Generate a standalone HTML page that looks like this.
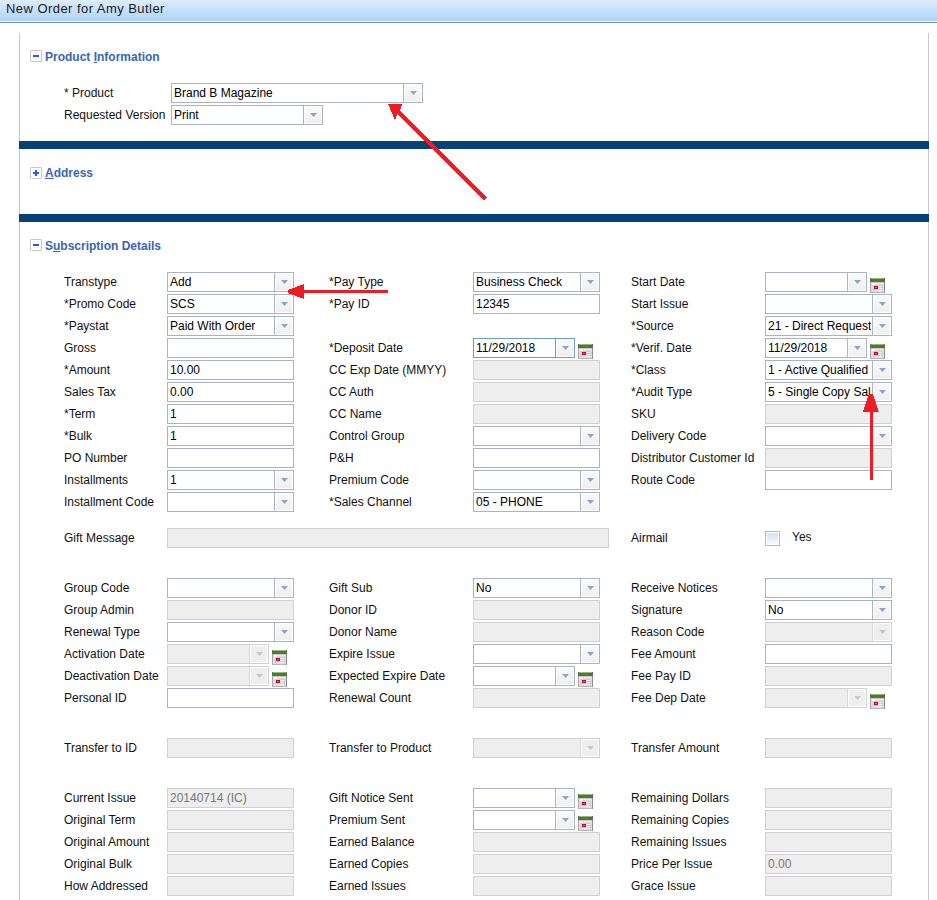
<!DOCTYPE html>
<html><head><meta charset="utf-8"><style>
*{box-sizing:border-box;margin:0;padding:0}
html,body{width:937px;height:900px;overflow:hidden;background:#fff;font-family:"Liberation Sans",sans-serif;font-size:12px;color:#000}
.title{position:absolute;left:0;top:0;width:937px;height:21px;background:linear-gradient(#ddedfd,#aed3f6);}
.title span{position:absolute;left:6px;top:1px;font-size:13px;color:#1a1a1a;letter-spacing:0.45px}
.tl1{position:absolute;left:0;top:21px;width:937px;height:1px;background:#fff}
.tl2{position:absolute;left:0;top:22px;width:937px;height:1px;background:#7095bb}
.vl{position:absolute;top:33px;width:1px;height:867px;background:#c8c8c8}
.bar{position:absolute;left:19px;width:910px;height:8px;background:#064275}
.hdr{position:absolute;left:30px;height:12px}
.box{position:absolute;left:0;top:0;width:12px;height:12px;border:1px solid #c8c8c8;border-radius:1px;background:#fff}
.box i{position:absolute;left:2px;top:4px;width:6px;height:2px;background:#1c5ff2}
.box b{position:absolute;left:4px;top:2px;width:2px;height:6px;background:#1c5ff2}
.hdr span{position:absolute;left:15px;top:0px;font-weight:bold;font-size:12px;color:#3a66b4;white-space:nowrap}
.hdr u{text-decoration:underline}
.lbl{position:absolute;height:20px;line-height:20px;white-space:nowrap;color:#111}
.inp{position:absolute;height:20px;border:1px solid #a9b4c3;background:#fff;overflow:hidden}
.inp.dis{border-color:#d0d0d0;background:#eeeeee}
.inp.foc{border-color:#6d9cc9}
.inp .v{position:absolute;left:2px;top:0;height:18px;line-height:18px;white-space:nowrap;color:#000}
.inp .v.gt{color:#777}
.sel .btn{position:absolute;right:0;top:0;width:19px;height:18px;border-left:1px solid #a9b4c3;background:#fff;padding:1px}
.inp.foc .btn{border-left-color:#6d9cc9}
.sel .btn::before{content:"";position:absolute;left:1px;top:1px;right:1px;bottom:1px;background:linear-gradient(#f9f9f9,#efefef)}
.sel .btn .tri{position:absolute;left:6px;top:7px;fill:#8aa4d0}
.inp.dis .btn{border-left-color:#d8d8d8}
.inp.dis .btn::before{background:#eeeeee}
.inp.dis .btn .tri{fill:#c8c8c8}
.inp.sel .v{right:20px;overflow:hidden}
.calw{position:absolute;width:15px;height:15px}
.cal{display:block}
.chk{position:absolute;width:15px;height:15px;border:1px solid #b1b9c4;background:#fff;padding:1px}
.chk::before{content:"";display:block;width:11px;height:11px;background:linear-gradient(#d3e1ef,#f7fafd)}
.arrows{position:absolute;left:0;top:0}
</style></head><body>
<div class="title"><span>New Order for Amy Butler</span></div>
<div class="tl1"></div><div class="tl2"></div>
<div class="vl" style="left:19px"></div>
<div class="vl" style="left:928px"></div>
<div class="hdr" style="top:50px"><div class="box"><i></i></div><span>Product <u>I</u>nformation</span></div>
<div class="bar" style="top:141px"></div>
<div class="hdr" style="top:167px"><div class="box"><i></i><b></b></div><span style="top:-1px"><u>A</u>ddress</span></div>
<div class="bar" style="top:214px"></div>
<div class="hdr" style="top:239px"><div class="box"><i></i></div><span>S<u>u</u>bscription Details</span></div>
<div class="lbl" style="left:64px;top:272px">Transtype</div><div class="inp sel" style="left:167px;top:272px;width:127px"><span class="v">Add</span><div class="btn"><svg class="tri" width="7" height="4"><path d="M0 0H7L3.5 4Z"/></svg></div></div><div class="lbl" style="left:64px;top:294px">*Promo Code</div><div class="inp sel" style="left:167px;top:294px;width:127px"><span class="v">SCS</span><div class="btn"><svg class="tri" width="7" height="4"><path d="M0 0H7L3.5 4Z"/></svg></div></div><div class="lbl" style="left:64px;top:316px">*Paystat</div><div class="inp sel" style="left:167px;top:316px;width:127px"><span class="v">Paid With Order</span><div class="btn"><svg class="tri" width="7" height="4"><path d="M0 0H7L3.5 4Z"/></svg></div></div><div class="lbl" style="left:64px;top:338px">Gross</div><div class="inp" style="left:167px;top:338px;width:127px"><span class="v"></span></div><div class="lbl" style="left:64px;top:360px">*Amount</div><div class="inp" style="left:167px;top:360px;width:127px"><span class="v">10.00</span></div><div class="lbl" style="left:64px;top:382px">Sales Tax</div><div class="inp" style="left:167px;top:382px;width:127px"><span class="v">0.00</span></div><div class="lbl" style="left:64px;top:404px">*Term</div><div class="inp" style="left:167px;top:404px;width:127px"><span class="v">1</span></div><div class="lbl" style="left:64px;top:426px">*Bulk</div><div class="inp" style="left:167px;top:426px;width:127px"><span class="v">1</span></div><div class="lbl" style="left:64px;top:448px">PO Number</div><div class="inp" style="left:167px;top:448px;width:127px"><span class="v"></span></div><div class="lbl" style="left:64px;top:470px">Installments</div><div class="inp sel" style="left:167px;top:470px;width:127px"><span class="v">1</span><div class="btn"><svg class="tri" width="7" height="4"><path d="M0 0H7L3.5 4Z"/></svg></div></div><div class="lbl" style="left:64px;top:492px">Installment Code</div><div class="inp sel" style="left:167px;top:492px;width:127px"><span class="v"></span><div class="btn"><svg class="tri" width="7" height="4"><path d="M0 0H7L3.5 4Z"/></svg></div></div><div class="lbl" style="left:329px;top:272px">*Pay Type</div><div class="inp sel" style="left:473px;top:272px;width:127px"><span class="v">Business Check</span><div class="btn"><svg class="tri" width="7" height="4"><path d="M0 0H7L3.5 4Z"/></svg></div></div><div class="lbl" style="left:329px;top:294px">*Pay ID</div><div class="inp" style="left:473px;top:294px;width:127px"><span class="v">12345</span></div><div class="lbl" style="left:329px;top:338px">*Deposit Date</div><div class="inp sel foc" style="left:473px;top:338px;width:102px"><span class="v">11/29/2018</span><div class="btn"><svg class="tri" width="7" height="4"><path d="M0 0H7L3.5 4Z"/></svg></div></div><div class="calw" style="left:578px;top:344px"><svg class="cal" width="15" height="15" viewBox="0 0 15 15" shape-rendering="crispEdges"><rect x="0" y="0" width="15" height="15" fill="#a9a9a9"/><rect x="1" y="4" width="13" height="10" fill="#dedede"/><rect x="14" y="3" width="1" height="12" fill="#8e8e8e"/><rect x="1" y="14" width="13" height="1" fill="#b9b9b9"/><rect x="0" y="0" width="15" height="4" fill="#4b7d2b"/><rect x="1" y="0" width="13" height="1" fill="#8fbb78"/><rect x="2" y="1" width="1" height="3" fill="#6b5a45"/><rect x="12" y="1" width="1" height="3" fill="#6b5a45"/><rect x="1" y="4" width="13" height="1" fill="#c9c9c9"/><rect x="2" y="5" width="3" height="2" fill="#fafafa"/><rect x="6" y="5" width="3" height="1" fill="#f0f0f0"/><rect x="10" y="5" width="3" height="1" fill="#f0f0f0"/><rect x="3" y="7" width="10" height="6" fill="#cfcfcf"/><rect x="4" y="8" width="8" height="1" fill="#f2f2f2"/><rect x="4" y="10" width="8" height="1" fill="#f2f2f2"/><rect x="4" y="12" width="8" height="1" fill="#f2f2f2"/><rect x="4" y="8" width="4" height="3" fill="#c3062f"/><rect x="5" y="9" width="2" height="1" fill="#d96a7e"/></svg></div><div class="lbl" style="left:329px;top:360px">CC Exp Date (MMYY)</div><div class="inp dis" style="left:473px;top:360px;width:127px"><span class="v"></span></div><div class="lbl" style="left:329px;top:382px">CC Auth</div><div class="inp dis" style="left:473px;top:382px;width:127px"><span class="v"></span></div><div class="lbl" style="left:329px;top:404px">CC Name</div><div class="inp dis" style="left:473px;top:404px;width:127px"><span class="v"></span></div><div class="lbl" style="left:329px;top:426px">Control Group</div><div class="inp sel" style="left:473px;top:426px;width:127px"><span class="v"></span><div class="btn"><svg class="tri" width="7" height="4"><path d="M0 0H7L3.5 4Z"/></svg></div></div><div class="lbl" style="left:329px;top:448px">P&amp;H</div><div class="inp" style="left:473px;top:448px;width:127px"><span class="v"></span></div><div class="lbl" style="left:329px;top:470px">Premium Code</div><div class="inp sel" style="left:473px;top:470px;width:127px"><span class="v"></span><div class="btn"><svg class="tri" width="7" height="4"><path d="M0 0H7L3.5 4Z"/></svg></div></div><div class="lbl" style="left:329px;top:492px">*Sales Channel</div><div class="inp sel" style="left:473px;top:492px;width:127px"><span class="v">05 - PHONE</span><div class="btn"><svg class="tri" width="7" height="4"><path d="M0 0H7L3.5 4Z"/></svg></div></div><div class="lbl" style="left:631px;top:272px">Start Date</div><div class="inp sel" style="left:765px;top:272px;width:102px"><span class="v"></span><div class="btn"><svg class="tri" width="7" height="4"><path d="M0 0H7L3.5 4Z"/></svg></div></div><div class="calw" style="left:870px;top:278px"><svg class="cal" width="15" height="15" viewBox="0 0 15 15" shape-rendering="crispEdges"><rect x="0" y="0" width="15" height="15" fill="#a9a9a9"/><rect x="1" y="4" width="13" height="10" fill="#dedede"/><rect x="14" y="3" width="1" height="12" fill="#8e8e8e"/><rect x="1" y="14" width="13" height="1" fill="#b9b9b9"/><rect x="0" y="0" width="15" height="4" fill="#4b7d2b"/><rect x="1" y="0" width="13" height="1" fill="#8fbb78"/><rect x="2" y="1" width="1" height="3" fill="#6b5a45"/><rect x="12" y="1" width="1" height="3" fill="#6b5a45"/><rect x="1" y="4" width="13" height="1" fill="#c9c9c9"/><rect x="2" y="5" width="3" height="2" fill="#fafafa"/><rect x="6" y="5" width="3" height="1" fill="#f0f0f0"/><rect x="10" y="5" width="3" height="1" fill="#f0f0f0"/><rect x="3" y="7" width="10" height="6" fill="#cfcfcf"/><rect x="4" y="8" width="8" height="1" fill="#f2f2f2"/><rect x="4" y="10" width="8" height="1" fill="#f2f2f2"/><rect x="4" y="12" width="8" height="1" fill="#f2f2f2"/><rect x="4" y="8" width="4" height="3" fill="#c3062f"/><rect x="5" y="9" width="2" height="1" fill="#d96a7e"/></svg></div><div class="lbl" style="left:631px;top:294px">Start Issue</div><div class="inp sel" style="left:765px;top:294px;width:127px"><span class="v"></span><div class="btn"><svg class="tri" width="7" height="4"><path d="M0 0H7L3.5 4Z"/></svg></div></div><div class="lbl" style="left:631px;top:316px">*Source</div><div class="inp sel" style="left:765px;top:316px;width:127px"><span class="v">21 - Direct Request</span><div class="btn"><svg class="tri" width="7" height="4"><path d="M0 0H7L3.5 4Z"/></svg></div></div><div class="lbl" style="left:631px;top:338px">*Verif. Date</div><div class="inp sel" style="left:765px;top:338px;width:102px"><span class="v">11/29/2018</span><div class="btn"><svg class="tri" width="7" height="4"><path d="M0 0H7L3.5 4Z"/></svg></div></div><div class="calw" style="left:870px;top:344px"><svg class="cal" width="15" height="15" viewBox="0 0 15 15" shape-rendering="crispEdges"><rect x="0" y="0" width="15" height="15" fill="#a9a9a9"/><rect x="1" y="4" width="13" height="10" fill="#dedede"/><rect x="14" y="3" width="1" height="12" fill="#8e8e8e"/><rect x="1" y="14" width="13" height="1" fill="#b9b9b9"/><rect x="0" y="0" width="15" height="4" fill="#4b7d2b"/><rect x="1" y="0" width="13" height="1" fill="#8fbb78"/><rect x="2" y="1" width="1" height="3" fill="#6b5a45"/><rect x="12" y="1" width="1" height="3" fill="#6b5a45"/><rect x="1" y="4" width="13" height="1" fill="#c9c9c9"/><rect x="2" y="5" width="3" height="2" fill="#fafafa"/><rect x="6" y="5" width="3" height="1" fill="#f0f0f0"/><rect x="10" y="5" width="3" height="1" fill="#f0f0f0"/><rect x="3" y="7" width="10" height="6" fill="#cfcfcf"/><rect x="4" y="8" width="8" height="1" fill="#f2f2f2"/><rect x="4" y="10" width="8" height="1" fill="#f2f2f2"/><rect x="4" y="12" width="8" height="1" fill="#f2f2f2"/><rect x="4" y="8" width="4" height="3" fill="#c3062f"/><rect x="5" y="9" width="2" height="1" fill="#d96a7e"/></svg></div><div class="lbl" style="left:631px;top:360px">*Class</div><div class="inp sel" style="left:765px;top:360px;width:127px"><span class="v">1 - Active Qualified</span><div class="btn"><svg class="tri" width="7" height="4"><path d="M0 0H7L3.5 4Z"/></svg></div></div><div class="lbl" style="left:631px;top:382px">*Audit Type</div><div class="inp sel" style="left:765px;top:382px;width:127px"><span class="v">5 - Single Copy Sales</span><div class="btn"><svg class="tri" width="7" height="4"><path d="M0 0H7L3.5 4Z"/></svg></div></div><div class="lbl" style="left:631px;top:404px">SKU</div><div class="inp dis" style="left:765px;top:404px;width:127px"><span class="v"></span></div><div class="lbl" style="left:631px;top:426px">Delivery Code</div><div class="inp sel" style="left:765px;top:426px;width:127px"><span class="v"></span><div class="btn"><svg class="tri" width="7" height="4"><path d="M0 0H7L3.5 4Z"/></svg></div></div><div class="lbl" style="left:631px;top:448px">Distributor Customer Id</div><div class="inp dis" style="left:765px;top:448px;width:127px"><span class="v"></span></div><div class="lbl" style="left:631px;top:470px">Route Code</div><div class="inp" style="left:765px;top:470px;width:127px"><span class="v"></span></div><div class="lbl" style="left:64px;top:528px">Gift Message</div><div class="inp dis" style="left:167px;top:528px;width:442px"><span class="v"></span></div><div class="lbl" style="left:631px;top:528px">Airmail</div><div class="chk" style="left:765px;top:531px"></div><div class="lbl" style="left:792px;top:527px">Yes</div><div class="lbl" style="left:64px;top:578px">Group Code</div><div class="inp sel" style="left:167px;top:578px;width:127px"><span class="v"></span><div class="btn"><svg class="tri" width="7" height="4"><path d="M0 0H7L3.5 4Z"/></svg></div></div><div class="lbl" style="left:64px;top:600px">Group Admin</div><div class="inp dis" style="left:167px;top:600px;width:127px"><span class="v"></span></div><div class="lbl" style="left:64px;top:622px">Renewal Type</div><div class="inp sel" style="left:167px;top:622px;width:127px"><span class="v"></span><div class="btn"><svg class="tri" width="7" height="4"><path d="M0 0H7L3.5 4Z"/></svg></div></div><div class="lbl" style="left:64px;top:644px">Activation Date</div><div class="inp sel dis" style="left:167px;top:644px;width:102px"><span class="v"></span><div class="btn"><svg class="tri" width="7" height="4"><path d="M0 0H7L3.5 4Z"/></svg></div></div><div class="calw" style="left:272px;top:650px"><svg class="cal" width="15" height="15" viewBox="0 0 15 15" shape-rendering="crispEdges"><rect x="0" y="0" width="15" height="15" fill="#a9a9a9"/><rect x="1" y="4" width="13" height="10" fill="#dedede"/><rect x="14" y="3" width="1" height="12" fill="#8e8e8e"/><rect x="1" y="14" width="13" height="1" fill="#b9b9b9"/><rect x="0" y="0" width="15" height="4" fill="#4b7d2b"/><rect x="1" y="0" width="13" height="1" fill="#8fbb78"/><rect x="2" y="1" width="1" height="3" fill="#6b5a45"/><rect x="12" y="1" width="1" height="3" fill="#6b5a45"/><rect x="1" y="4" width="13" height="1" fill="#c9c9c9"/><rect x="2" y="5" width="3" height="2" fill="#fafafa"/><rect x="6" y="5" width="3" height="1" fill="#f0f0f0"/><rect x="10" y="5" width="3" height="1" fill="#f0f0f0"/><rect x="3" y="7" width="10" height="6" fill="#cfcfcf"/><rect x="4" y="8" width="8" height="1" fill="#f2f2f2"/><rect x="4" y="10" width="8" height="1" fill="#f2f2f2"/><rect x="4" y="12" width="8" height="1" fill="#f2f2f2"/><rect x="4" y="8" width="4" height="3" fill="#c3062f"/><rect x="5" y="9" width="2" height="1" fill="#d96a7e"/></svg></div><div class="lbl" style="left:64px;top:666px">Deactivation Date</div><div class="inp sel dis" style="left:167px;top:666px;width:102px"><span class="v"></span><div class="btn"><svg class="tri" width="7" height="4"><path d="M0 0H7L3.5 4Z"/></svg></div></div><div class="calw" style="left:272px;top:672px"><svg class="cal" width="15" height="15" viewBox="0 0 15 15" shape-rendering="crispEdges"><rect x="0" y="0" width="15" height="15" fill="#a9a9a9"/><rect x="1" y="4" width="13" height="10" fill="#dedede"/><rect x="14" y="3" width="1" height="12" fill="#8e8e8e"/><rect x="1" y="14" width="13" height="1" fill="#b9b9b9"/><rect x="0" y="0" width="15" height="4" fill="#4b7d2b"/><rect x="1" y="0" width="13" height="1" fill="#8fbb78"/><rect x="2" y="1" width="1" height="3" fill="#6b5a45"/><rect x="12" y="1" width="1" height="3" fill="#6b5a45"/><rect x="1" y="4" width="13" height="1" fill="#c9c9c9"/><rect x="2" y="5" width="3" height="2" fill="#fafafa"/><rect x="6" y="5" width="3" height="1" fill="#f0f0f0"/><rect x="10" y="5" width="3" height="1" fill="#f0f0f0"/><rect x="3" y="7" width="10" height="6" fill="#cfcfcf"/><rect x="4" y="8" width="8" height="1" fill="#f2f2f2"/><rect x="4" y="10" width="8" height="1" fill="#f2f2f2"/><rect x="4" y="12" width="8" height="1" fill="#f2f2f2"/><rect x="4" y="8" width="4" height="3" fill="#c3062f"/><rect x="5" y="9" width="2" height="1" fill="#d96a7e"/></svg></div><div class="lbl" style="left:64px;top:688px">Personal ID</div><div class="inp" style="left:167px;top:688px;width:127px"><span class="v"></span></div><div class="lbl" style="left:329px;top:578px">Gift Sub</div><div class="inp sel" style="left:473px;top:578px;width:127px"><span class="v">No</span><div class="btn"><svg class="tri" width="7" height="4"><path d="M0 0H7L3.5 4Z"/></svg></div></div><div class="lbl" style="left:329px;top:600px">Donor ID</div><div class="inp dis" style="left:473px;top:600px;width:127px"><span class="v"></span></div><div class="lbl" style="left:329px;top:622px">Donor Name</div><div class="inp dis" style="left:473px;top:622px;width:127px"><span class="v"></span></div><div class="lbl" style="left:329px;top:644px">Expire Issue</div><div class="inp sel" style="left:473px;top:644px;width:127px"><span class="v"></span><div class="btn"><svg class="tri" width="7" height="4"><path d="M0 0H7L3.5 4Z"/></svg></div></div><div class="lbl" style="left:329px;top:666px">Expected Expire Date</div><div class="inp sel" style="left:473px;top:666px;width:102px"><span class="v"></span><div class="btn"><svg class="tri" width="7" height="4"><path d="M0 0H7L3.5 4Z"/></svg></div></div><div class="calw" style="left:578px;top:672px"><svg class="cal" width="15" height="15" viewBox="0 0 15 15" shape-rendering="crispEdges"><rect x="0" y="0" width="15" height="15" fill="#a9a9a9"/><rect x="1" y="4" width="13" height="10" fill="#dedede"/><rect x="14" y="3" width="1" height="12" fill="#8e8e8e"/><rect x="1" y="14" width="13" height="1" fill="#b9b9b9"/><rect x="0" y="0" width="15" height="4" fill="#4b7d2b"/><rect x="1" y="0" width="13" height="1" fill="#8fbb78"/><rect x="2" y="1" width="1" height="3" fill="#6b5a45"/><rect x="12" y="1" width="1" height="3" fill="#6b5a45"/><rect x="1" y="4" width="13" height="1" fill="#c9c9c9"/><rect x="2" y="5" width="3" height="2" fill="#fafafa"/><rect x="6" y="5" width="3" height="1" fill="#f0f0f0"/><rect x="10" y="5" width="3" height="1" fill="#f0f0f0"/><rect x="3" y="7" width="10" height="6" fill="#cfcfcf"/><rect x="4" y="8" width="8" height="1" fill="#f2f2f2"/><rect x="4" y="10" width="8" height="1" fill="#f2f2f2"/><rect x="4" y="12" width="8" height="1" fill="#f2f2f2"/><rect x="4" y="8" width="4" height="3" fill="#c3062f"/><rect x="5" y="9" width="2" height="1" fill="#d96a7e"/></svg></div><div class="lbl" style="left:329px;top:688px">Renewal Count</div><div class="inp dis" style="left:473px;top:688px;width:127px"><span class="v"></span></div><div class="lbl" style="left:631px;top:578px">Receive Notices</div><div class="inp sel" style="left:765px;top:578px;width:127px"><span class="v"></span><div class="btn"><svg class="tri" width="7" height="4"><path d="M0 0H7L3.5 4Z"/></svg></div></div><div class="lbl" style="left:631px;top:600px">Signature</div><div class="inp sel" style="left:765px;top:600px;width:127px"><span class="v">No</span><div class="btn"><svg class="tri" width="7" height="4"><path d="M0 0H7L3.5 4Z"/></svg></div></div><div class="lbl" style="left:631px;top:622px">Reason Code</div><div class="inp sel dis" style="left:765px;top:622px;width:127px"><span class="v"></span><div class="btn"><svg class="tri" width="7" height="4"><path d="M0 0H7L3.5 4Z"/></svg></div></div><div class="lbl" style="left:631px;top:644px">Fee Amount</div><div class="inp" style="left:765px;top:644px;width:127px"><span class="v"></span></div><div class="lbl" style="left:631px;top:666px">Fee Pay ID</div><div class="inp dis" style="left:765px;top:666px;width:127px"><span class="v"></span></div><div class="lbl" style="left:631px;top:688px">Fee Dep Date</div><div class="inp sel dis" style="left:765px;top:688px;width:102px"><span class="v"></span><div class="btn"><svg class="tri" width="7" height="4"><path d="M0 0H7L3.5 4Z"/></svg></div></div><div class="calw" style="left:870px;top:694px"><svg class="cal" width="15" height="15" viewBox="0 0 15 15" shape-rendering="crispEdges"><rect x="0" y="0" width="15" height="15" fill="#a9a9a9"/><rect x="1" y="4" width="13" height="10" fill="#dedede"/><rect x="14" y="3" width="1" height="12" fill="#8e8e8e"/><rect x="1" y="14" width="13" height="1" fill="#b9b9b9"/><rect x="0" y="0" width="15" height="4" fill="#4b7d2b"/><rect x="1" y="0" width="13" height="1" fill="#8fbb78"/><rect x="2" y="1" width="1" height="3" fill="#6b5a45"/><rect x="12" y="1" width="1" height="3" fill="#6b5a45"/><rect x="1" y="4" width="13" height="1" fill="#c9c9c9"/><rect x="2" y="5" width="3" height="2" fill="#fafafa"/><rect x="6" y="5" width="3" height="1" fill="#f0f0f0"/><rect x="10" y="5" width="3" height="1" fill="#f0f0f0"/><rect x="3" y="7" width="10" height="6" fill="#cfcfcf"/><rect x="4" y="8" width="8" height="1" fill="#f2f2f2"/><rect x="4" y="10" width="8" height="1" fill="#f2f2f2"/><rect x="4" y="12" width="8" height="1" fill="#f2f2f2"/><rect x="4" y="8" width="4" height="3" fill="#c3062f"/><rect x="5" y="9" width="2" height="1" fill="#d96a7e"/></svg></div><div class="lbl" style="left:64px;top:738px">Transfer to ID</div><div class="inp dis" style="left:167px;top:738px;width:127px"><span class="v"></span></div><div class="lbl" style="left:329px;top:738px">Transfer to Product</div><div class="inp sel dis" style="left:473px;top:738px;width:127px"><span class="v"></span><div class="btn"><svg class="tri" width="7" height="4"><path d="M0 0H7L3.5 4Z"/></svg></div></div><div class="lbl" style="left:631px;top:738px">Transfer Amount</div><div class="inp dis" style="left:765px;top:738px;width:127px"><span class="v"></span></div><div class="lbl" style="left:64px;top:788px">Current Issue</div><div class="inp dis" style="left:167px;top:788px;width:127px"><span class="v gt">20140714 (IC)</span></div><div class="lbl" style="left:64px;top:810px">Original Term</div><div class="inp dis" style="left:167px;top:810px;width:127px"><span class="v"></span></div><div class="lbl" style="left:64px;top:832px">Original Amount</div><div class="inp dis" style="left:167px;top:832px;width:127px"><span class="v"></span></div><div class="lbl" style="left:64px;top:854px">Original Bulk</div><div class="inp dis" style="left:167px;top:854px;width:127px"><span class="v"></span></div><div class="lbl" style="left:64px;top:876px">How Addressed</div><div class="inp dis" style="left:167px;top:876px;width:127px"><span class="v"></span></div><div class="lbl" style="left:329px;top:788px">Gift Notice Sent</div><div class="inp sel" style="left:473px;top:788px;width:102px"><span class="v"></span><div class="btn"><svg class="tri" width="7" height="4"><path d="M0 0H7L3.5 4Z"/></svg></div></div><div class="calw" style="left:578px;top:794px"><svg class="cal" width="15" height="15" viewBox="0 0 15 15" shape-rendering="crispEdges"><rect x="0" y="0" width="15" height="15" fill="#a9a9a9"/><rect x="1" y="4" width="13" height="10" fill="#dedede"/><rect x="14" y="3" width="1" height="12" fill="#8e8e8e"/><rect x="1" y="14" width="13" height="1" fill="#b9b9b9"/><rect x="0" y="0" width="15" height="4" fill="#4b7d2b"/><rect x="1" y="0" width="13" height="1" fill="#8fbb78"/><rect x="2" y="1" width="1" height="3" fill="#6b5a45"/><rect x="12" y="1" width="1" height="3" fill="#6b5a45"/><rect x="1" y="4" width="13" height="1" fill="#c9c9c9"/><rect x="2" y="5" width="3" height="2" fill="#fafafa"/><rect x="6" y="5" width="3" height="1" fill="#f0f0f0"/><rect x="10" y="5" width="3" height="1" fill="#f0f0f0"/><rect x="3" y="7" width="10" height="6" fill="#cfcfcf"/><rect x="4" y="8" width="8" height="1" fill="#f2f2f2"/><rect x="4" y="10" width="8" height="1" fill="#f2f2f2"/><rect x="4" y="12" width="8" height="1" fill="#f2f2f2"/><rect x="4" y="8" width="4" height="3" fill="#c3062f"/><rect x="5" y="9" width="2" height="1" fill="#d96a7e"/></svg></div><div class="lbl" style="left:329px;top:810px">Premium Sent</div><div class="inp sel" style="left:473px;top:810px;width:102px"><span class="v"></span><div class="btn"><svg class="tri" width="7" height="4"><path d="M0 0H7L3.5 4Z"/></svg></div></div><div class="calw" style="left:578px;top:816px"><svg class="cal" width="15" height="15" viewBox="0 0 15 15" shape-rendering="crispEdges"><rect x="0" y="0" width="15" height="15" fill="#a9a9a9"/><rect x="1" y="4" width="13" height="10" fill="#dedede"/><rect x="14" y="3" width="1" height="12" fill="#8e8e8e"/><rect x="1" y="14" width="13" height="1" fill="#b9b9b9"/><rect x="0" y="0" width="15" height="4" fill="#4b7d2b"/><rect x="1" y="0" width="13" height="1" fill="#8fbb78"/><rect x="2" y="1" width="1" height="3" fill="#6b5a45"/><rect x="12" y="1" width="1" height="3" fill="#6b5a45"/><rect x="1" y="4" width="13" height="1" fill="#c9c9c9"/><rect x="2" y="5" width="3" height="2" fill="#fafafa"/><rect x="6" y="5" width="3" height="1" fill="#f0f0f0"/><rect x="10" y="5" width="3" height="1" fill="#f0f0f0"/><rect x="3" y="7" width="10" height="6" fill="#cfcfcf"/><rect x="4" y="8" width="8" height="1" fill="#f2f2f2"/><rect x="4" y="10" width="8" height="1" fill="#f2f2f2"/><rect x="4" y="12" width="8" height="1" fill="#f2f2f2"/><rect x="4" y="8" width="4" height="3" fill="#c3062f"/><rect x="5" y="9" width="2" height="1" fill="#d96a7e"/></svg></div><div class="lbl" style="left:329px;top:832px">Earned Balance</div><div class="inp dis" style="left:473px;top:832px;width:127px"><span class="v"></span></div><div class="lbl" style="left:329px;top:854px">Earned Copies</div><div class="inp dis" style="left:473px;top:854px;width:127px"><span class="v"></span></div><div class="lbl" style="left:329px;top:876px">Earned Issues</div><div class="inp dis" style="left:473px;top:876px;width:127px"><span class="v"></span></div><div class="lbl" style="left:631px;top:788px">Remaining Dollars</div><div class="inp dis" style="left:765px;top:788px;width:127px"><span class="v"></span></div><div class="lbl" style="left:631px;top:810px">Remaining Copies</div><div class="inp dis" style="left:765px;top:810px;width:127px"><span class="v"></span></div><div class="lbl" style="left:631px;top:832px">Remaining Issues</div><div class="inp dis" style="left:765px;top:832px;width:127px"><span class="v"></span></div><div class="lbl" style="left:631px;top:854px">Price Per Issue</div><div class="inp dis" style="left:765px;top:854px;width:127px"><span class="v gt">0.00</span></div><div class="lbl" style="left:631px;top:876px">Grace Issue</div><div class="inp dis" style="left:765px;top:876px;width:127px"><span class="v"></span></div><div class="lbl" style="left:64px;top:83px">* Product</div><div class="inp sel" style="left:171px;top:83px;width:252px"><span class="v">Brand B Magazine</span><div class="btn"><svg class="tri" width="7" height="4"><path d="M0 0H7L3.5 4Z"/></svg></div></div><div class="lbl" style="left:64px;top:105px">Requested Version</div><div class="inp sel" style="left:171px;top:105px;width:152px"><span class="v">Print</span><div class="btn"><svg class="tri" width="7" height="4"><path d="M0 0H7L3.5 4Z"/></svg></div></div>
<svg class="arrows" width="937" height="900" viewBox="0 0 937 900" shape-rendering="crispEdges">
<g fill="#ed1c24">
<path d="M388 104 L402 104 L400 111 L486.5 197.5 L484 200 L397.5 114 L395 120 Z"/>
<path d="M288 290 L304 284 L304 290 L388 290 L388 293 L304 293 L304 299 L288 293 Z"/>
<path d="M869 394 L873 394 L879 412 L873 412 L873 480 L870 480 L870 412 L863 412 Z"/>
</g></svg>
</body></html>
